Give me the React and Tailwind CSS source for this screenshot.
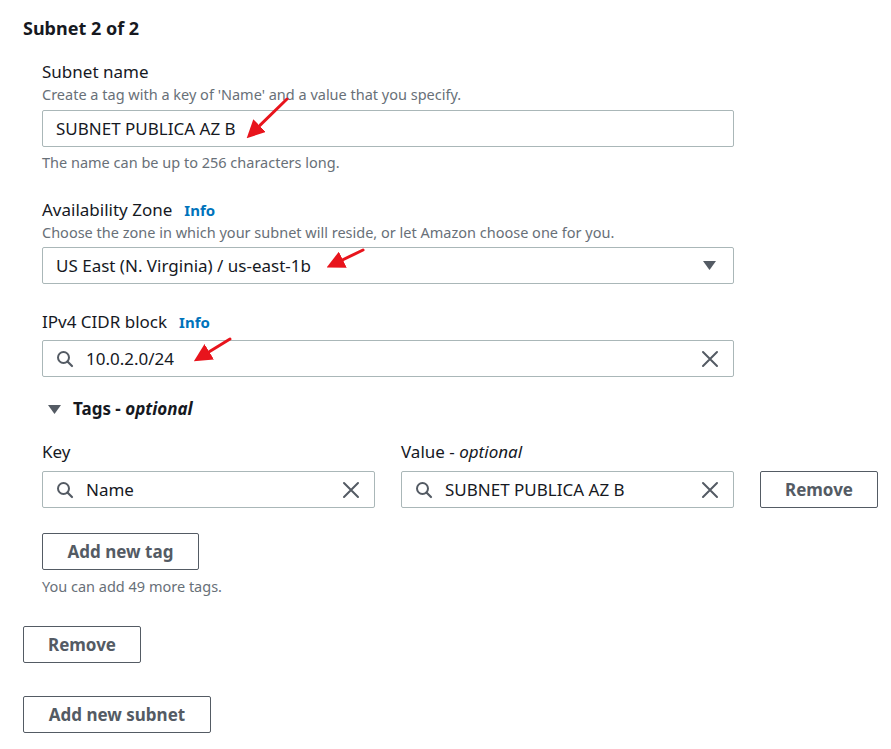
import { useState } from 'react';

const font = { fontFamily: '"Noto Sans", "Open Sans", Arial, sans-serif' };

function SearchIcon() {
  return (
    <svg width="18" height="18" viewBox="0 0 18 18" className="shrink-0">
      <circle cx="7.5" cy="7.5" r="5.5" fill="none" stroke="#545b64" strokeWidth="2" />
      <path d="M11.5 11.5 L16 16" stroke="#545b64" strokeWidth="2.2" strokeLinecap="round" />
    </svg>
  );
}

function ClearIcon() {
  return (
    <svg width="18" height="18" viewBox="0 0 18 18" className="shrink-0">
      <path d="M2 2 L16 16 M16 2 L2 16" stroke="#545b64" strokeWidth="2" strokeLinecap="round" />
    </svg>
  );
}

function Caret({ className = '' }) {
  return (
    <svg width="13" height="9" viewBox="0 0 13 9" className={className}>
      <path d="M0 0 H13 L6.5 9 Z" fill="#545b64" />
    </svg>
  );
}

function SearchInput({ value, className = '' }) {
  return (
    <div className={`flex h-[37px] items-center rounded-[2px] border border-[#aab7b8] bg-white pl-[13px] pr-[14px] ${className}`}>
      <SearchIcon />
      <span className="ml-[12px] flex-1 truncate text-[17px] text-[#16191f]">{value}</span>
      <ClearIcon />
    </div>
  );
}

function Button({ children, className = '' }) {
  return (
    <button className={`h-[37px] rounded-[2px] border border-[#545b64] bg-white text-[17px] font-bold text-[#545b64] ${className}`}>
      {children}
    </button>
  );
}

function Label({ children, info, infoGap = 'ml-3' }) {
  return (
    <div className="flex items-baseline text-[17px] leading-[22px] text-[#16191f]">
      {children}
      {info && <span className={`${infoGap} text-[15px] font-bold text-[#0073bb]`}>Info</span>}
    </div>
  );
}

function Hint({ children, className = '' }) {
  return <p className={`text-[14.5px] leading-[20px] text-[#687078] ${className}`}>{children}</p>;
}

// Flèches rouges d'annotation posées par-dessus le formulaire.
function Arrows() {
  const arrows = [
    [287, 99, 251, 134],
    [363, 250, 332, 265],
    [230, 339, 199, 358],
  ];
  return (
    <svg className="pointer-events-none absolute inset-0" width="891" height="749">
      <defs>
        <marker id="head" markerWidth="6" markerHeight="6" refX="4" refY="3" orient="auto">
          <path d="M0 0 L6 3 L0 6 Z" fill="#e8141c" />
        </marker>
      </defs>
      {arrows.map(([x1, y1, x2, y2], i) => (
        <line key={i} x1={x1} y1={y1} x2={x2} y2={y2} stroke="#e8141c" strokeWidth="3" strokeLinecap="round" markerEnd="url(#head)" />
      ))}
    </svg>
  );
}

export default function App() {
  const [open] = useState(true);

  return (
    <div className="relative h-[749px] w-[891px] overflow-hidden bg-white pl-[23px] pt-[17px]" style={font}>
      <h2 className="text-[18px] font-bold leading-[22px] text-[#16191f]">Subnet 2 of 2</h2>

      <div className="pl-[19px]">
        <div className="mt-[22px]">
          <Label>Subnet name</Label>
          <Hint className="mt-px">Create a tag with a key of 'Name' and a value that you specify.</Hint>
          <div className="mt-[6px] flex h-[37px] w-[692px] items-center rounded-[2px] border border-[#aab7b8] px-[13px] text-[17px] text-[#16191f]">
            SUBNET PUBLICA AZ B
          </div>
          <Hint className="mt-[5px]">The name can be up to 256 characters long.</Hint>
        </div>

        <div className="mt-[27px]">
          <Label info>Availability Zone</Label>
          <Hint className="mt-px">Choose the zone in which your subnet will reside, or let Amazon choose one for you.</Hint>
          <div className="mt-[5px] flex h-[37px] w-[692px] items-center rounded-[2px] border border-[#aab7b8] pl-[13px] pr-[17px] text-[17px] text-[#16191f]">
            <span className="flex-1">US East (N. Virginia) / us-east-1b</span>
            <Caret />
          </div>
        </div>

        <div className="mt-[27px]">
          <Label info infoGap="ml-[12px]">IPv4 CIDR block</Label>
          <SearchInput value="10.0.2.0/24" className="mt-[7px] w-[692px]" />
        </div>

        <div className="mt-[21px] flex items-center text-[17px] leading-[22px] text-[#16191f]">
          <Caret className="ml-[6px]" />
          <span className="ml-[12px] font-bold text-[#16191f]">
            Tags - <span className="italic">optional</span>
          </span>
        </div>

        {open && (
          <div>
            <div className="mt-[21px] grid grid-cols-[333px_333px_118px] gap-x-[26px]">
              <Label>Key</Label>
              <Label>
                Value -&nbsp;<span className="italic">optional</span>
              </Label>
              <div />
              <SearchInput value="Name" className="mt-[8px]" />
              <SearchInput value="SUBNET PUBLICA AZ B" className="mt-[8px]" />
              <Button className="mt-[8px] w-[118px]">Remove</Button>
            </div>
            <Button className="mt-[25px] w-[157px]">Add new tag</Button>
            <Hint className="mt-[6px]">You can add 49 more tags.</Hint>
          </div>
        )}
      </div>

      <div className="flex flex-col items-start">
        <Button className="mt-[30px] w-[118px]">Remove</Button>
        <Button className="mt-[33px] w-[188px]">Add new subnet</Button>
      </div>

      <Arrows />
    </div>
  );
}
